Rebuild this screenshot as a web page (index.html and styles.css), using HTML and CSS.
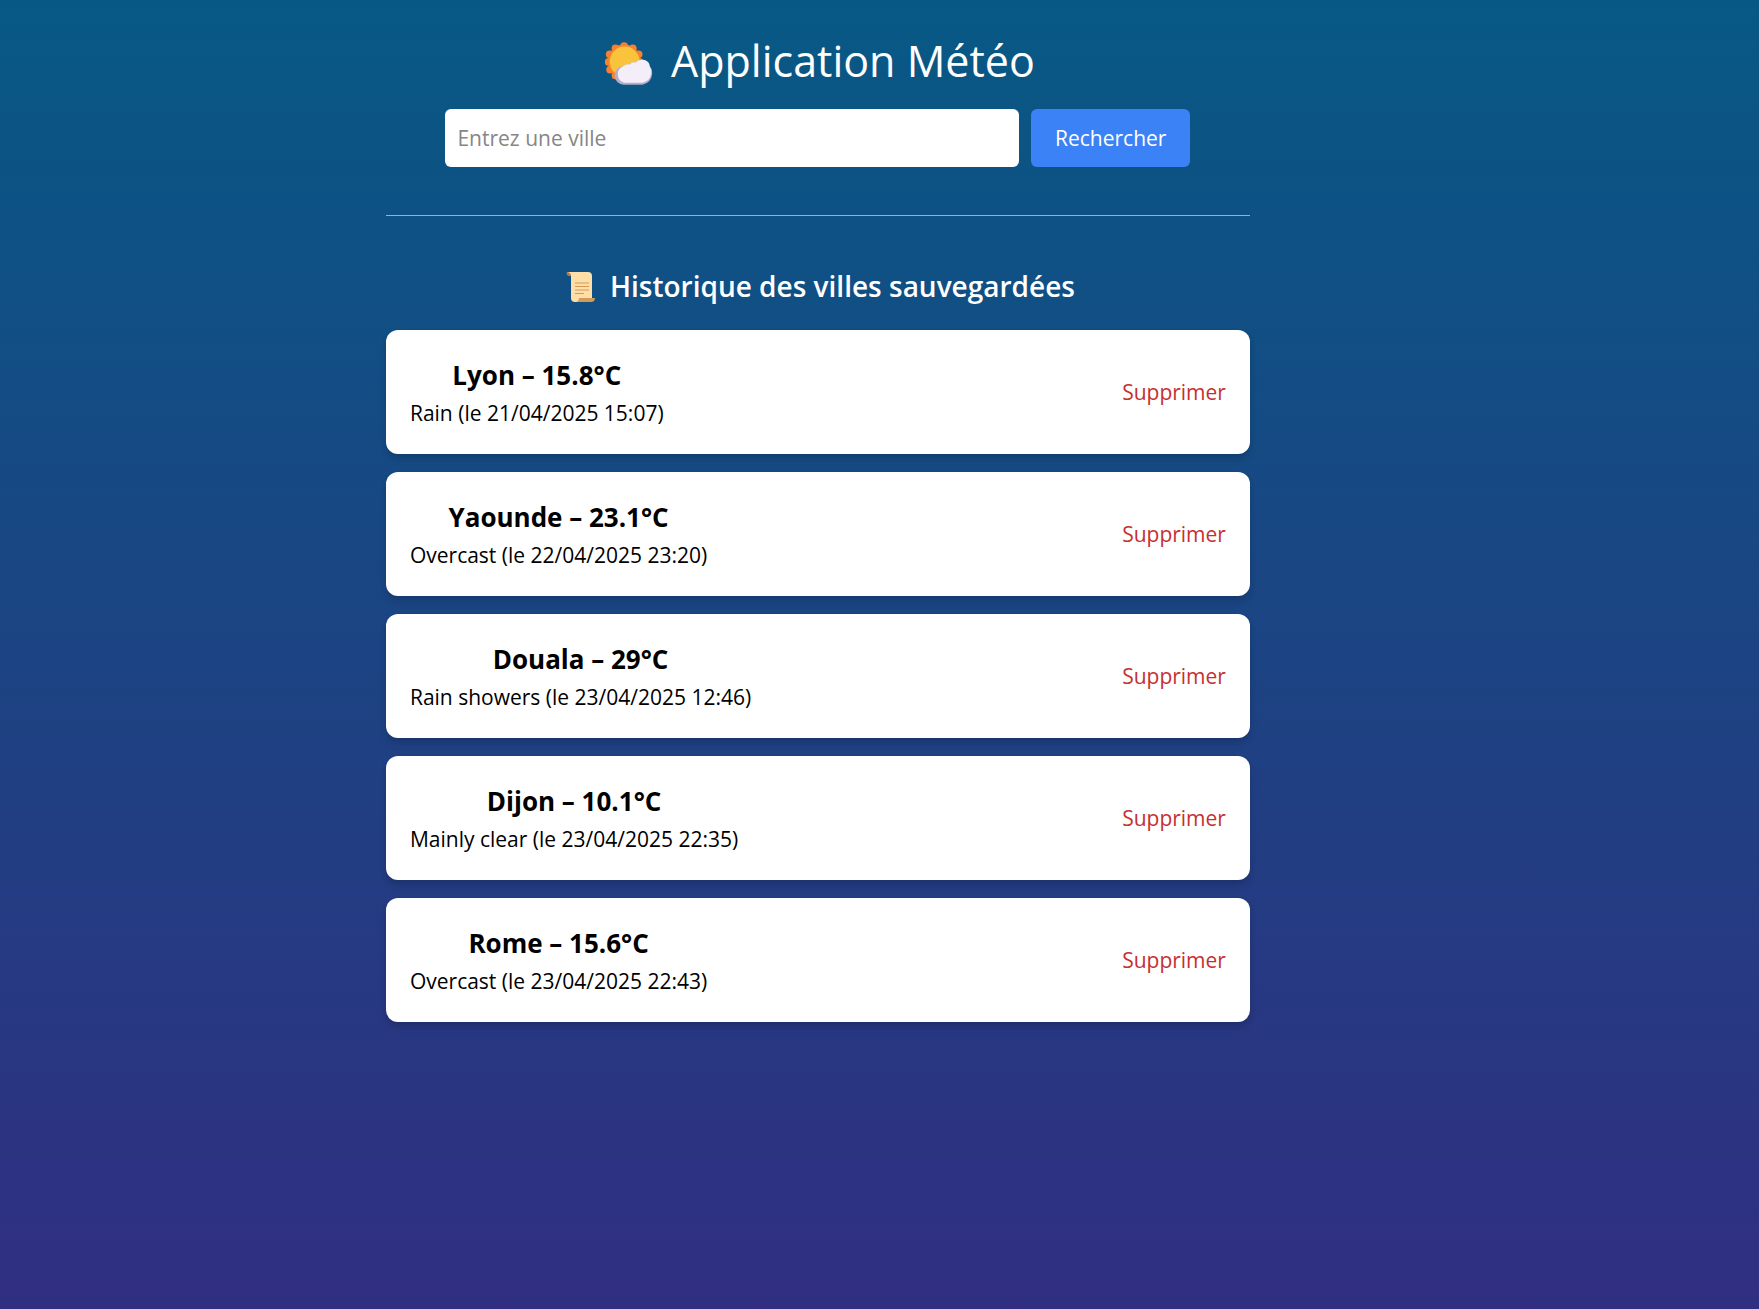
FILE: index.html
```html
<!DOCTYPE html>
<html lang="fr">
<head>
<meta charset="utf-8">
<meta name="viewport" content="width=device-width, initial-scale=1">
<title>Application Météo</title>
<link rel="stylesheet" href="styles.css">
</head>
<body>
<main class="app">
  <h1 class="app-title">
    <svg class="icon-weather" viewBox="0 -8 56 58" aria-hidden="true">
      <g fill="#f8812e">
        <circle cx="24" cy="21" r="17"/>
        <circle cx="24" cy="5.500" r="4"/><circle cx="33" cy="8" r="4"/><circle cx="39" cy="14" r="4"/>
        <circle cx="40" cy="22" r="4"/><circle cx="15" cy="8" r="4"/><circle cx="9" cy="14" r="4"/>
        <circle cx="8" cy="22" r="4"/><circle cx="9.500" cy="30" r="4"/><circle cx="15" cy="36" r="4"/>
      </g>
      <circle cx="24.500" cy="21.500" r="15.500" fill="#fac33c"/>
      <path d="M24 45.500a9.500 9.500 0 0 1-1-19q3-3 7-2 2-3 6-2 3-4 9-2.500 5 1.500 5.500 6.500 3 3 2.500 8.500-1 9-10 10.500z" fill="#b4acc8"/>
      <path d="M24 43.500a9 9 0 0 1-1-17q3-3 7-2 2-3 6-2 3-4 9-2.500 5 1.500 5.500 6.500 2 3 1.500 7.500-1 8-9 9.500z" fill="#f3eef8"/>
    </svg>
    <span>Application Météo</span>
  </h1>
  <form class="search">
    <input class="search-input" type="text" placeholder="Entrez une ville" aria-label="Entrez une ville">
    <button class="search-button" type="button">Rechercher</button>
  </form>
  <hr class="divider">
  <section>
    <h2 class="history-title">
      <svg class="icon-scroll" viewBox="-3 -1 37 34" aria-hidden="true">
        <path d="M3 2h6v4H5C3 6 2 3 3 2z" fill="#b97a48"/>
        <path d="M4 2h20q4 0 4 4v24q0 2-3 2H11q-4 0-4-4V6q0-3-3-4z" fill="#ffdea7"/>
        <path d="M15 28h16q0 4-4 4H11q4 0 4-4z" fill="#d49a56"/>
        <path d="M11 13h14M11 16.500h14M11 20h14M11 23.500h9" stroke="#d79a55" stroke-width="1.200"/>
      </svg>
      <span>Historique des villes sauvegardées</span>
    </h2>
    <ul class="cards">
      <li class="card">
        <div class="card-text"><h3 class="card-title">Lyon – 15.8°C</h3><p class="card-info">Rain (le 21/04/2025 15:07)</p></div>
        <button class="delete" type="button">Supprimer</button>
      </li>
      <li class="card">
        <div class="card-text"><h3 class="card-title">Yaounde – 23.1°C</h3><p class="card-info">Overcast (le 22/04/2025 23:20)</p></div>
        <button class="delete" type="button">Supprimer</button>
      </li>
      <li class="card">
        <div class="card-text"><h3 class="card-title">Douala – 29°C</h3><p class="card-info">Rain showers (le 23/04/2025 12:46)</p></div>
        <button class="delete" type="button">Supprimer</button>
      </li>
      <li class="card">
        <div class="card-text"><h3 class="card-title">Dijon – 10.1°C</h3><p class="card-info">Mainly clear (le 23/04/2025 22:35)</p></div>
        <button class="delete" type="button">Supprimer</button>
      </li>
      <li class="card">
        <div class="card-text"><h3 class="card-title">Rome – 15.6°C</h3><p class="card-info">Overcast (le 23/04/2025 22:43)</p></div>
        <button class="delete" type="button">Supprimer</button>
      </li>
    </ul>
  </section>
</main>
</body>
</html>
```
FILE: styles.css
```css
* {
  box-sizing: border-box;
  margin: 0;
  padding: 0;
}

body {
  min-height: 100vh;
  padding: 31px 7% 24px 0;
  background: linear-gradient(to bottom, #075985, #312e81);
  font-family: "Segoe UI", "Open Sans", "Noto Sans", sans-serif;
  font-size: 21px;
  color: #000;
}

.app {
  max-width: 864px;
  margin: 0 auto;
}

.app-title,
.history-title {
  display: flex;
  align-items: center;
  justify-content: center;
  color: #fff;
}

.app-title {
  gap: 16px;
  margin-bottom: 18px;
  font-size: 43px;
  font-weight: 400;
  line-height: 60px;
}

.icon-weather {
  width: 54px;
  height: 56px;
}

.search {
  display: flex;
  gap: 12px;
  max-width: 745px;
  margin: 0 auto;
}

.search-input {
  flex: 1;
  min-width: 0;
  height: 58px;
  padding: 0 12px;
  border: 0;
  border-radius: 6px;
  background: #fff;
  font: inherit;
}

.search-input::placeholder {
  color: #868686;
}

.search-button {
  padding: 0 24px;
  border: 0;
  border-radius: 6px;
  background: #3b82f6;
  color: #fff;
  font: inherit;
  cursor: pointer;
}

.divider {
  margin: 48px 0;
  border: 0;
  border-top: 1px solid #9db1c6;
}

.history-title {
  gap: 12px;
  margin-bottom: 22px;
  font-size: 28px;
  font-weight: 600;
  line-height: 44px;
}

.icon-scroll {
  width: 37px;
  height: 34px;
}

.cards {
  display: grid;
  gap: 18px;
  list-style: none;
}

.card {
  display: flex;
  align-items: center;
  justify-content: space-between;
  padding: 24px;
  border-radius: 12px;
  background: #fff;
  box-shadow: 0 6px 9px -1px rgba(0, 0, 0, 0.1), 0 3px 6px -1px rgba(0, 0, 0, 0.1);
}

.card-title {
  font-size: 26px;
  font-weight: 700;
  line-height: 42px;
  text-align: center;
}

.card-info {
  line-height: 34px;
}

.delete {
  border: 0;
  background: none;
  color: #c53030;
  font: inherit;
  cursor: pointer;
}
```
